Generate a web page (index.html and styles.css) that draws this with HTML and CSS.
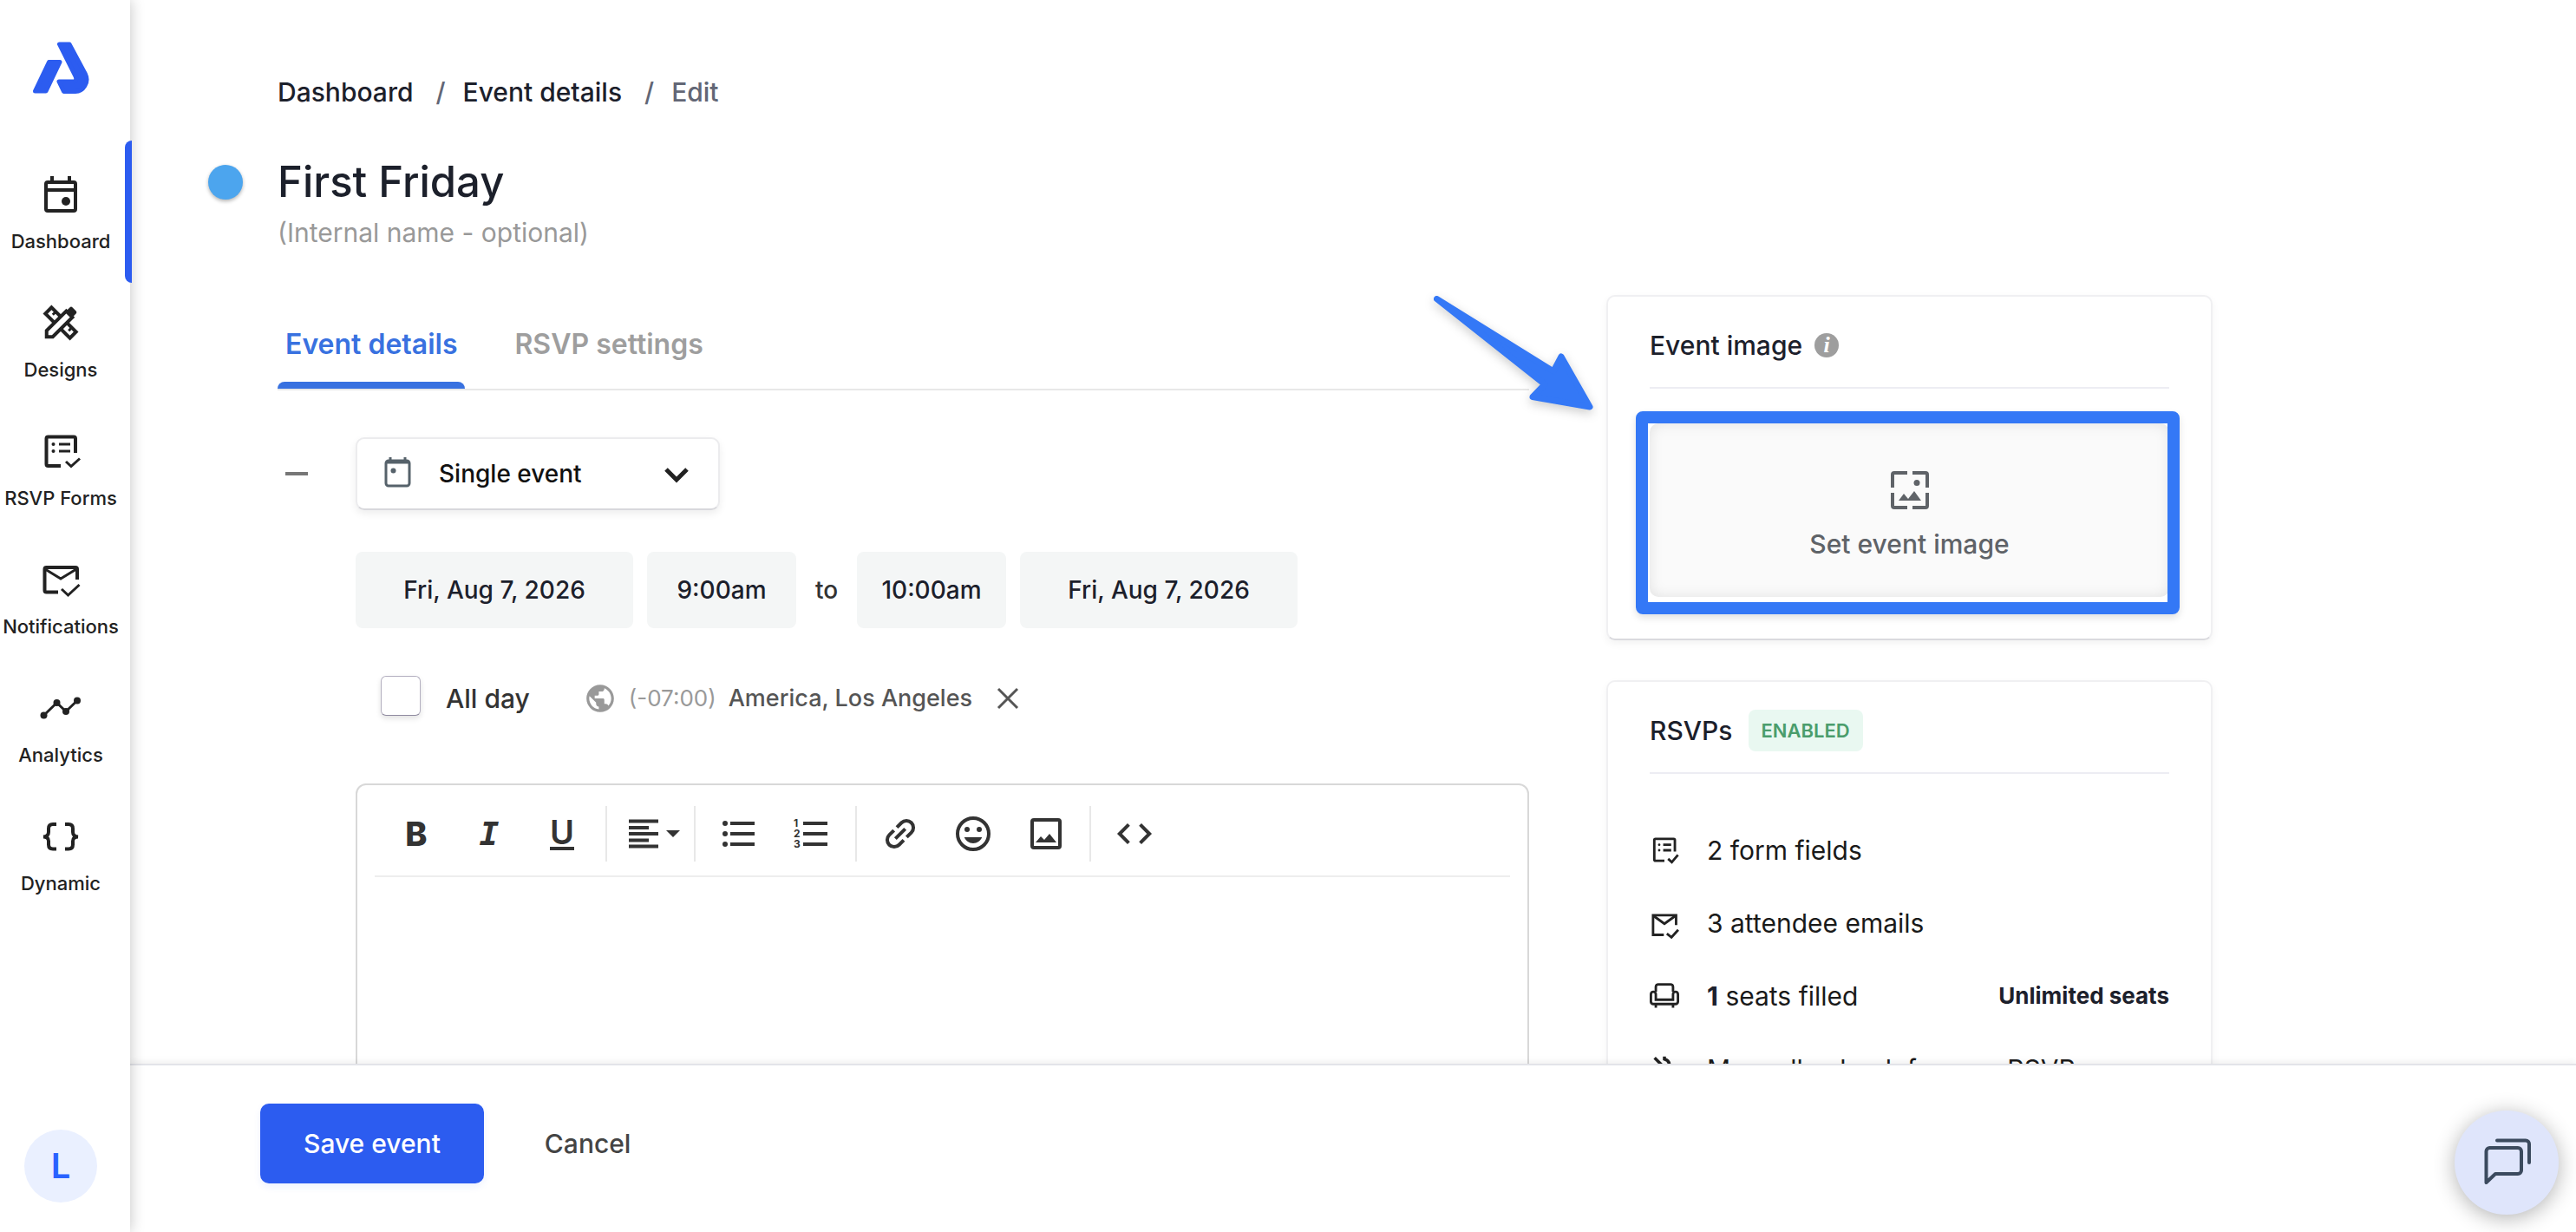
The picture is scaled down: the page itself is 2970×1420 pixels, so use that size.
FILE: index.html
```html
<!DOCTYPE html>
<html lang="en">
  <head>
    <meta charset="UTF-8" />
    <meta name="viewport" content="width=device-width, initial-scale=1.0" />
    <title>Edit event</title>
    <link rel="stylesheet" href="styles.css">
  </head>
  <body>
    <div class="app">
      <aside class="sidebar">
        <a href="#" class="logo" aria-label="Home">
          <svg width="66" height="60" viewBox="0 0 66 60">
            <g fill="#2c5cf0" stroke="#2c5cf0" stroke-width="5" stroke-linejoin="round">
              <path d="M3.5 57L19.5 23.5H32L16 57Z" />
              <path d="M31.5 3H43L61.500 37.500C66 47 59 57.500 50 57.500H36.500L31 46H48C50.500 46 51.500 43 50 40Z" />
            </g>
          </svg>
        </a>
        <nav class="nav">
          <a href="#" class="nav-item active">
            <svg class="icon" viewBox="0 0 48 48">
              <rect x="7" y="10" width="34" height="33" rx="2" />
              <path d="M7 19H41M14 3V9M34 3V9" />
              <circle cx="30" cy="32" r="5" class="solid" />
            </svg>
            <span>Dashboard</span>
          </a>
          <a href="#" class="nav-item">
            <svg class="icon" viewBox="0 0 48 48">
              <g transform="rotate(45 24 24)">
                <rect x="4" y="19" width="40" height="10" />
                <path d="M11 19v5M37 19v5" stroke-width="3" />
              </g>
              <g transform="rotate(-45 24 24)">
                <path d="M1 24L6 19H38V29H6Z" fill="#fff" />
                <rect x="37" y="19" width="9" height="10" rx="2" class="solid" stroke="#222" />
              </g>
            </svg>
            <span>Designs</span>
          </a>
          <a href="#" class="nav-item">
            <svg class="icon" viewBox="0 0 48 48">
              <path d="M24 41H9.500a2 2 0 0 1-2-2V9.500a2 2 0 0 1 2-2H39a2 2 0 0 1 2 2V26" />
              <path d="M22 16H35M22 24H35M30 36l6 5.500 10-9" stroke-width="3" />
              <circle cx="15.500" cy="16" r="2" class="solid" />
              <circle cx="15.500" cy="24" r="2" class="solid" />
            </svg>
            <span>RSVP Forms</span>
          </a>
          <a href="#" class="nav-item">
            <svg class="icon" viewBox="0 0 48 48">
              <path d="M21 38.500H7.500a2 2 0 0 1-2-2V12a2 2 0 0 1 2-2H41a2 2 0 0 1 2 2V24" />
              <path d="M6 12l18 11 18-11M25 35l7.500 7 13-12" stroke-width="3" />
            </svg>
            <span>Notifications</span>
          </a>
          <a href="#" class="nav-item">
            <svg class="icon" viewBox="0 0 48 48">
              <path d="M4.500 32.500L19.500 18 30 28 43 15.500" stroke-width="3" />
              <circle cx="4.500" cy="32.500" r="4" class="solid" />
              <circle cx="19.500" cy="18" r="4" class="solid" />
              <circle cx="30" cy="28" r="4" class="solid" />
              <circle cx="43" cy="15.500" r="4" class="solid" />
            </svg>
            <span>Analytics</span>
          </a>
          <a href="#" class="nav-item">
            <svg class="icon" viewBox="0 0 48 48">
              <path d="M19 10h-4q-5 0-5 5v4q0 5-6 5.500 6 0 6 5v4q0 5 5 5h4M29 10h4q5 0 5 5v4q0 5 6 5.500-6 0-6 5v4q0 5-5 5h-4" />
            </svg>
            <span>Dynamic</span>
          </a>
        </nav>
        <button class="avatar">L</button>
      </aside>

      <div class="page">
        <main class="content">
          <nav class="breadcrumb">
            <a href="#">Dashboard</a>
            <span>/</span>
            <a href="#">Event details</a>
            <span>/</span>
            <span>Edit</span>
          </nav>
          <header class="event-head">
            <h1><button class="event-color" aria-label="Event color"></button>First Friday</h1>
            <input class="internal-name" type="text" aria-label="Internal name" placeholder="(Internal name - optional)" />
          </header>

          <div class="columns">
            <section class="details">
              <div class="tabs">
                <button class="tab tab-active">Event details</button>
                <button class="tab">RSVP settings</button>
              </div>

              <div class="form-row">
                <button class="collapse" aria-label="Collapse"><span></span></button>
                <div class="form">
                  <div class="type-select">
                    <svg class="type-icon" width="34" height="38" viewBox="0 0 34 38">
                      <rect x="3" y="5" width="27" height="29" rx="3" fill="none" stroke="#56626b" stroke-width="3" />
                      <path d="M3 7H30M8 1V6M25 1V6" stroke="#56626b" stroke-width="3" />
                      <circle cx="11.500" cy="16.500" r="3" fill="#56626b" />
                    </svg>
                    <select aria-label="Event type">
                      <option>Single event</option>
                    </select>
                    <svg class="type-arrow" width="28" height="18" viewBox="0 0 28 18">
                      <path d="M2 2L14 14 26 2" fill="none" stroke="#222" stroke-width="5" />
                    </svg>
                  </div>

                  <div class="dates">
                    <input class="date" type="text" aria-label="Start date" value="Fri, Aug 7, 2026" />
                    <input class="time" type="text" aria-label="Start time" value="9:00am" />
                    <span class="to">to</span>
                    <input class="time" type="text" aria-label="End time" value="10:00am" />
                    <input class="date" type="text" aria-label="End date" value="Fri, Aug 7, 2026" />
                  </div>

                  <div class="options">
                    <input type="checkbox" id="all-day" />
                    <label for="all-day">All day</label>
                    <svg class="globe" width="38" height="38" viewBox="0 0 24 24" fill="#999">
                      <path d="M12 2C6.480 2 2 6.480 2 12s4.480 10 10 10 10-4.480 10-10S17.520 2 12 2zm-1 17.930c-3.950-.490-7-3.850-7-7.930 0-.620.080-1.210.210-1.790L9 15v1c0 1.100.900 2 2 2v1.930zm6.900-2.540c-.260-.810-1-1.390-1.900-1.390h-1v-3c0-.550-.450-1-1-1H8v-2h2c.550 0 1-.450 1-1V7h2c1.100 0 2-.900 2-2v-.410c2.930 1.190 5 4.060 5 7.410 0 2.080-.800 3.970-2.100 5.390z" />
                    </svg>
                    <span class="offset">(-07:00)</span>
                    <span class="zone">America, Los Angeles</span>
                    <button class="clear" aria-label="Remove timezone">
                      <svg width="26" height="26" viewBox="0 0 26 26"><path d="M2 2L24 24M24 2L2 24" stroke="#555" stroke-width="3" /></svg>
                    </button>
                  </div>

                  <div class="editor">
                    <div class="toolbar">
                      <button class="tool bold">B</button>
                      <button class="tool italic">I</button>
                      <button class="tool underline"><span>U</span></button>
                      <i class="sep"></i>
                      <button class="tool" aria-label="Align">
                        <svg width="60" height="48" viewBox="0 0 60 48">
                          <path d="M5 9.500H39M5 17H28M5 24H39M5 31.500H28M5 38.500H39" stroke-width="4" />
                          <path d="M48 20H64L56 28Z" class="solid" />
                        </svg>
                      </button>
                      <i class="sep"></i>
                      <button class="tool" aria-label="Bulleted list">
                        <svg width="48" height="48" viewBox="0 0 48 48">
                          <path d="M14 12H42M14 24H42M14 36H42" />
                          <circle cx="8" cy="12" r="3" class="solid" />
                          <circle cx="8" cy="24" r="3" class="solid" />
                          <circle cx="8" cy="36" r="3" class="solid" />
                        </svg>
                      </button>
                      <button class="tool" aria-label="Numbered list">
                        <svg width="48" height="48" viewBox="0 0 48 48">
                          <path d="M14 12H42M14 24H42M14 36H42" />
                          <text x="3" y="16">1</text>
                          <text x="3" y="28">2</text>
                          <text x="3" y="40">3</text>
                        </svg>
                      </button>
                      <i class="sep"></i>
                      <button class="tool" aria-label="Link">
                        <svg width="48" height="48" viewBox="0 0 24 24">
                          <path transform="rotate(-45 12 12)" d="M10.800 8H7a4 4 0 0 0 0 8h3.800M13.200 8H17a4 4 0 0 1 0 8h-3.800M8 12h8" stroke-width="2" />
                        </svg>
                      </button>
                      <button class="tool" aria-label="Emoji">
                        <svg width="48" height="48" viewBox="0 0 24 24">
                          <circle cx="12" cy="12" r="9" stroke-width="2" />
                          <circle cx="8.500" cy="9.500" r="1.500" class="solid" />
                          <circle cx="15.500" cy="9.500" r="1.500" class="solid" />
                          <path d="M12 17.500c2.330 0 4.310-1.460 5.110-3.500H6.890c.800 2.040 2.780 3.500 5.110 3.500z" class="solid" />
                        </svg>
                      </button>
                      <button class="tool" aria-label="Image">
                        <svg width="48" height="48" viewBox="0 0 24 24">
                          <rect x="4" y="4" width="16" height="16" rx="1" stroke-width="2" />
                          <path d="M6 17L9 13.500 11 15.500 14 12 18 17Z" class="solid" />
                        </svg>
                      </button>
                      <i class="sep"></i>
                      <button class="tool" aria-label="Source code">
                        <svg width="48" height="48" viewBox="0 0 24 24">
                          <path d="M8.700 6.700L3.400 12 8.700 17.300M15.300 6.700L20.600 12 15.300 17.300" stroke-width="2" />
                        </svg>
                      </button>
                    </div>
                    <textarea aria-label="Description"></textarea>
                  </div>
                </div>
              </div>
            </section>

            <aside class="cards">
              <svg class="arrow" width="190" height="138" viewBox="0 0 190 138">
                <path d="M4.500 4.500L139 88 148 71 181 129 115 117.500 129 103Z" fill="#3478f6" stroke="#3478f6" stroke-width="7" stroke-linejoin="round" />
              </svg>
              <section class="card">
                <header class="card-head">
                  <h2>Event image</h2>
                  <span class="info">i</span>
                </header>
                <div class="drop-wrap">
                  <button class="drop">
                    <svg width="44" height="44" viewBox="0 0 44 44" fill="none" stroke="#5f6368" stroke-width="4">
                      <path d="M2 19V4a2 2 0 0 1 2-2H19M25 2H40a2 2 0 0 1 2 2V19M42 25V40a2 2 0 0 1-2 2H25M19 42H4a2 2 0 0 1-2-2V25" />
                      <circle cx="30" cy="13.500" r="3.500" fill="#5f6368" stroke="none" />
                      <path d="M9 34L15 26 20 32 27 23 35 34Z" fill="#5f6368" stroke="none" />
                    </svg>
                    <span>Set event image</span>
                  </button>
                </div>
              </section>

              <section class="card">
                <header class="card-head">
                  <h2>RSVPs</h2>
                  <span class="badge">ENABLED</span>
                </header>
                <ul class="stats">
                  <li>
                    <svg class="icon" viewBox="0 0 48 48">
                      <path d="M24 41H9.500a2 2 0 0 1-2-2V7.500a2 2 0 0 1 2-2H39a2 2 0 0 1 2 2V26" />
                      <path d="M22 15H35M22 24H35M30 38l6 5.500 10-12" />
                      <circle cx="15.500" cy="15" r="2" class="solid" />
                      <circle cx="15.500" cy="24" r="2" class="solid" />
                    </svg>
                    <span>2 form fields</span>
                  </li>
                  <li>
                    <svg class="icon" viewBox="0 0 48 48">
                      <path d="M23 43H5.500V11H43V27" />
                      <path d="M6 12l18 13 18-13M28 41l7.500 6 11-12" />
                    </svg>
                    <span>3 attendee emails</span>
                  </li>
                  <li>
                    <svg class="icon" viewBox="0 0 48 48">
                      <path d="M10 17V9a4 4 0 0 1 4-4H34a4 4 0 0 1 4 4V17M10 30V21a4 4 0 0 0-8 0V33a4 4 0 0 0 4 4H42a4 4 0 0 0 4-4V21a4 4 0 0 0-8 0V30ZM10 38V43M38 38V43" />
                    </svg>
                    <span><b>1</b> seats filled</span>
                    <strong>Unlimited seats</strong>
                  </li>
                  <li>
                    <svg class="icon" viewBox="0 0 48 48">
                      <path d="M8 6L20 18M24 4v4q8 2 8 10M14 16L40 42M12 22q-4 12 6 16" stroke-width="5" />
                    </svg>
                    <span>Manually check for new RSVPs</span>
                  </li>
                </ul>
              </section>
            </aside>
          </div>
        </main>

        <footer class="actions">
          <button class="save">Save event</button>
          <button class="cancel">Cancel</button>
        </footer>
      </div>

      <button class="chat" aria-label="Open chat">
        <svg width="60" height="60" viewBox="0 0 60 60" fill="none" stroke="#3b4a5e" stroke-width="4" stroke-linecap="round" stroke-linejoin="round">
          <path d="M6.500 17a4 4 0 0 1 4-4H43a4 4 0 0 1 4 4V39a4 4 0 0 1-4 4H17L6.500 53Z" />
          <path d="M19 4.500H52a4 4 0 0 1 4 4V30" />
        </svg>
      </button>
    </div>
  </body>
</html>
```
FILE: styles.css
```css
* {
  box-sizing: border-box;
}
body {
  margin: 0;
  background-color: #fff;
  color: #1c202b;
  font-family: Inter, "Liberation Sans", sans-serif;
  font-size: 30px;
  font-weight: 500;
  line-height: 40px;
}
a {
  color: inherit;
  text-decoration: none;
}
button,
input,
select,
textarea {
  font: inherit;
  color: inherit;
  border: none;
  padding: 0;
  background-color: transparent;
}
button {
  cursor: pointer;
}
h1,
h2 {
  margin: 0;
  font-weight: 500;
}
.app {
  display: flex;
  height: 100vh;
  overflow: hidden;
}

/* sidebar */
.sidebar {
  position: relative;
  z-index: 3;
  display: flex;
  flex-direction: column;
  align-items: center;
  flex: none;
  width: 150px;
  padding: 48px 10px 34px 0;
  background-color: #fff;
  box-shadow: 0 0 16px rgba(0, 0, 0, 0.24);
}
.logo {
  height: 122px;
}
.nav {
  width: 100%;
}
.nav-item {
  display: flex;
  flex-direction: column;
  align-items: center;
  gap: 15px;
  height: 148px;
  padding-top: 30px;
  color: #222;
  font-size: 22px;
  line-height: 30px;
  white-space: nowrap;
}
.nav-item.active::after {
  content: "";
  position: absolute;
  top: 162px;
  right: -2px;
  width: 8px;
  height: 164px;
  border-radius: 8px 0 0 8px;
  background-color: #2c5cf0;
}
.icon {
  flex: none;
  width: 48px;
  height: 48px;
  fill: none;
  stroke: #222;
  stroke-width: 4;
  overflow: visible;
}
.icon .solid {
  fill: #222;
  stroke: none;
}
.avatar {
  width: 84px;
  height: 84px;
  margin-top: auto;
  border-radius: 50%;
  background-color: #eaf0ff;
  color: #2962ff;
  font-size: 40px;
  font-weight: 600;
}

/* page */
.page {
  display: flex;
  flex-direction: column;
  flex: 1;
  min-width: 0;
}
.content {
  flex: 1;
  min-height: 0;
  overflow: hidden;
  padding: 86px 170px 0;
}
.breadcrumb {
  display: flex;
  color: #626675;
}
.breadcrumb a {
  color: #1c202b;
}
.breadcrumb span {
  margin-left: 26px;
}
.breadcrumb span + a,
.breadcrumb span + span {
  margin-left: 20px;
}
.event-head {
  display: flex;
  flex-direction: column;
  margin-top: 52px;
}
.event-head h1 {
  display: flex;
  align-items: center;
  font-size: 49px;
  line-height: 64px;
}
.event-color {
  width: 40px;
  height: 40px;
  margin: 0 40px 0 -80px;
  border-radius: 50%;
  background-color: #4ca5ee;
  box-shadow: 0 2px 4px rgba(0, 0, 0, 0.3);
}
.internal-name {
  width: 600px;
  height: 40px;
  margin-top: 6px;
  font-weight: 400;
}
.internal-name::placeholder {
  color: #999;
}
.columns {
  display: grid;
  grid-template-columns: minmax(0, 1443fr) minmax(0, 699fr);
  gap: 89px;
  max-width: 2231px;
  margin-top: 52px;
}

/* tabs */
.tabs {
  display: flex;
  gap: 48px;
  padding-top: 36px;
  border-bottom: 2px solid #e8e8e8;
}
.tab {
  position: relative;
  height: 72px;
  padding: 0 9px 30px;
  color: #9e9e9e;
  font-size: 32px;
  font-weight: 600;
}
.tab-active {
  color: #3871e0;
}
.tab-active::after {
  content: "";
  position: absolute;
  left: 0;
  right: 0;
  bottom: 0;
  height: 8px;
  border-radius: 8px 8px 0 0;
  background-color: #3871e0;
}

/* form */
.form-row {
  display: flex;
  padding-top: 54px;
}
.collapse {
  flex: none;
  width: 90px;
  height: 84px;
  padding-left: 9px;
}
.collapse span {
  display: block;
  width: 26px;
  height: 4px;
  background-color: #777;
}
.form {
  flex: 1;
  min-width: 0;
}
.type-select {
  position: relative;
  width: 420px;
  height: 84px;
}
.type-select select {
  appearance: none;
  width: 100%;
  height: 100%;
  padding-left: 94px;
  border: 2px solid #ececee;
  border-bottom-color: #d8d8dc;
  border-radius: 10px;
  background-color: #fff;
  box-shadow: 0 4px 10px rgba(0, 0, 0, 0.07);
  color: #111;
  font-size: 28px;
}
.type-icon,
.type-arrow {
  position: absolute;
  pointer-events: none;
}
.type-icon {
  left: 32px;
  top: 22px;
}
.type-arrow {
  right: 36px;
  top: 35px;
}
.dates {
  display: flex;
  align-items: center;
  gap: 16px;
  margin-top: 48px;
  font-size: 28px;
}
.date,
.time {
  width: 320px;
  height: 88px;
  border-radius: 8px;
  background-color: #f4f6f6;
  text-align: center;
}
.time {
  width: 172px;
}
.to {
  width: 38px;
  color: #333;
  text-align: center;
}
.options {
  display: flex;
  align-items: center;
  height: 52px;
  margin-top: 55px;
  padding-left: 29px;
}
.options input {
  appearance: none;
  align-self: flex-start;
  width: 46px;
  height: 46px;
  margin: 0;
  border: 1px solid #b4b0c0;
  border-bottom-color: #8f8aa0;
  border-radius: 6px;
  background-color: #fff;
  box-shadow: 0 3px 6px rgba(0, 0, 0, 0.12);
}
.options label {
  margin-left: 29px;
  color: #333;
}
.globe {
  margin-left: 62px;
}
.offset,
.zone {
  font-size: 27px;
}
.offset {
  margin-left: 14px;
  color: #999;
  font-size: 26px;
  font-weight: 400;
}
.zone {
  margin-left: 14px;
  color: #555;
}
.clear {
  height: 26px;
  margin-left: 28px;
  line-height: 0;
}

/* editor */
.editor {
  margin-top: 72px;
  padding: 0 20px;
  border: 2px solid #d8d8d8;
  border-radius: 12px;
}
.toolbar {
  display: flex;
  align-items: center;
  padding: 24px 6px 16px;
  border-bottom: 2px solid #eee;
}
.tool {
  display: flex;
  align-items: center;
  justify-content: center;
  width: 84px;
  height: 64px;
  color: #333;
}
.tool svg {
  fill: none;
  stroke: #333;
  stroke-width: 4;
  overflow: visible;
}
.tool .solid {
  fill: #333;
  stroke: none;
}
.tool text {
  fill: #333;
  stroke: none;
  font-size: 12px;
  font-weight: 700;
}
.bold {
  font-size: 38px;
  font-weight: 800;
}
.italic {
  font-family: "DejaVu Sans Mono", monospace;
  font-size: 38px;
  font-style: italic;
  font-weight: 700;
}
.underline span {
  width: 28px;
  border-bottom: 4px solid #333;
  font-size: 38px;
  font-weight: 600;
  line-height: 34px;
}
.sep {
  width: 2px;
  height: 64px;
  margin: 0 8px;
  background-color: #e8e8e8;
}
.editor textarea {
  display: block;
  width: 100%;
  height: 400px;
  resize: none;
}

/* cards */
.cards {
  position: relative;
  display: flex;
  flex-direction: column;
  gap: 46px;
}
.arrow {
  position: absolute;
  left: -200px;
  top: 0;
  filter: drop-shadow(0 4px 6px rgba(0, 0, 0, 0.2));
}
.card {
  padding: 28px 48px 48px;
  border: 2px solid #f0f0f2;
  border-bottom-color: #dadade;
  border-radius: 10px;
  background-color: #fff;
  box-shadow: 0 4px 10px rgba(0, 0, 0, 0.05);
}
.card-head {
  display: flex;
  align-items: center;
  height: 78px;
  padding-bottom: 20px;
  border-bottom: 2px solid #ededf3;
}
.card-head h2 {
  font-size: 30px;
}
.info {
  width: 28px;
  height: 28px;
  margin-left: 14px;
  border-radius: 50%;
  background-color: #9e9e9e;
  color: #fff;
  font-family: "Liberation Serif", serif;
  font-size: 26px;
  font-style: italic;
  font-weight: 700;
  line-height: 28px;
  text-align: center;
}
.badge {
  height: 48px;
  margin-left: 18px;
  padding: 0 15px;
  border-radius: 8px;
  background-color: #e9f8f1;
  color: #4a9d6c;
  font-size: 22px;
  font-weight: 600;
  line-height: 48px;
}
.drop-wrap {
  position: relative;
  margin-top: 40px;
}
.drop-wrap::after {
  content: "";
  position: absolute;
  inset: -14px -12px -20px -16px;
  border: 14px solid #3478f6;
  border-radius: 8px;
  box-shadow: 0 4px 8px rgba(0, 0, 0, 0.12);
  pointer-events: none;
}
.drop {
  display: flex;
  flex-direction: column;
  align-items: center;
  justify-content: center;
  gap: 20px;
  width: 100%;
  height: 200px;
  padding-top: 14px;
  border-radius: 10px;
  background-color: #fafafa;
  box-shadow: inset 0 0 16px rgba(0, 0, 0, 0.1);
  color: #5f6368;
}
.stats {
  margin: 46px 0 0;
  padding: 0;
  list-style: none;
}
.stats li {
  display: flex;
  align-items: center;
  height: 84px;
  color: #1a1a1a;
  font-weight: 400;
}
.stats .icon {
  width: 34px;
  height: 34px;
  margin-right: 32px;
}
.stats b,
.stats strong {
  color: #1c202b;
  font-weight: 700;
}
.stats strong {
  margin-left: auto;
  font-size: 26px;
}

/* footer */
.actions {
  position: relative;
  z-index: 2;
  display: flex;
  align-items: center;
  gap: 70px;
  flex: none;
  height: 194px;
  padding: 0 150px 12px;
  border-top: 2px solid #e3e4e9;
  background-color: #fff;
  box-shadow: 0 -2px 8px rgba(0, 0, 0, 0.07);
}
.save {
  height: 92px;
  padding: 0 50px;
  border-radius: 10px;
  background-color: #2c5cf0;
  box-shadow: 0 4px 8px rgba(44, 92, 240, 0.08);
  color: #fff;
}
.cancel {
  color: #444;
}
.chat {
  position: fixed;
  z-index: 4;
  right: 20px;
  bottom: 20px;
  display: flex;
  align-items: center;
  justify-content: center;
  width: 120px;
  height: 120px;
  border-radius: 50%;
  background-color: #dfe5fb;
  box-shadow: 0 4px 24px rgba(0, 0, 0, 0.3);
}
```
